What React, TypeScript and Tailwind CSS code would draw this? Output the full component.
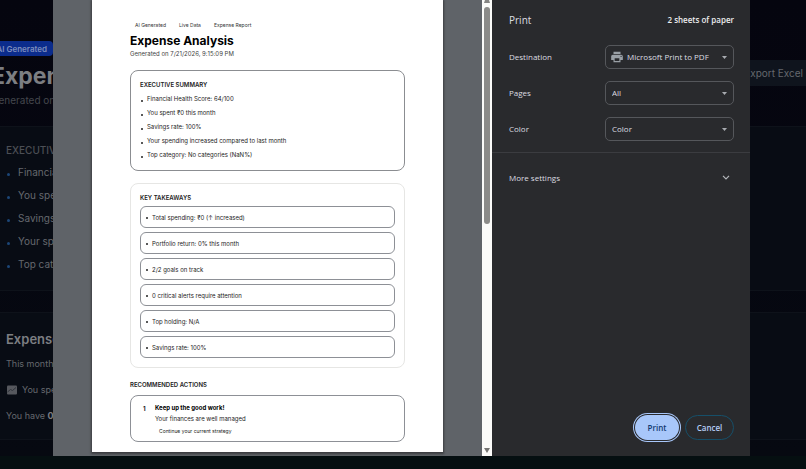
import type { ReactNode } from 'react';
import { MdPrint } from 'react-icons/md';

const highlights = ['Financial Health', 'You spent ₹0', 'Savings rate', 'Your spending', 'Top category'];

const summary = [
  'Financial Health Score: 64/100',
  'You spent ₹0 this month',
  'Savings rate: 100%',
  'Your spending increased compared to last month',
  'Top category: No categories (NaN%)',
];

const takeaways = [
  'Total spending: ₹0 (↑ increased)',
  'Portfolio return: 0% this month',
  '2/2 goals on track',
  '0 critical alerts require attention',
  'Top holding: N/A',
  'Savings rate: 100%',
];

const ReportPage = () => (
  <main className="overflow-hidden bg-gradient-to-b from-[#05050f] to-[#060911] pb-4 text-[#65686e]">
    <header className="-ml-[9px] flex h-[126px] items-start justify-between pt-[41px]">
      <div className="whitespace-nowrap">
        <span className="flex h-[15px] w-[62px] items-center justify-end rounded bg-[#0b2c8c] pr-[6px] text-[8px] font-semibold text-[#7d8dbd]">
          AI Generated
        </span>
        <h1 className="mt-1 text-[23px] leading-8 font-bold text-[#7c7e82]">Expense</h1>
        <p className="text-[10px] leading-4 text-[#44474d]">Generated on 7/21/2026</p>
      </div>
      <button className="mt-[19px] h-[26px] w-[78px] bg-[#0f141d] pr-[3px] text-right text-[10px] whitespace-nowrap text-[#65686e]">
        Export Excel
      </button>
    </header>

    <section className="border-y border-[#0e121a] bg-[#080c14] px-[6px] pt-[15px] pb-[14px]">
      <h2 className="text-[10px] leading-4 font-medium text-[#4c4f55]">EXECUTIVE SUMMARY</h2>
      <ul className="mt-[3px] text-[10px] leading-[23px]">
        {highlights.map((line) => (
          <li key={line} className="flex items-center gap-2">
            <span className="mt-1 ml-[1px] h-[3px] w-[3px] rounded-full bg-[#1c4677]"></span>
            {line}
          </li>
        ))}
      </ul>
    </section>

    <section className="mt-[21px] border-y border-[#0e121a] bg-[#080c14] px-[6px] pt-4 pb-[10px] text-[9px] leading-[26px]">
      <h2 className="text-[13px] leading-5 font-semibold text-[#7c7e82]">Expense</h2>
      <p className="mt-[2px]">This month</p>
      <p className="flex items-center gap-[5px]">
        <svg viewBox="0 0 10 10" className="ml-[1px] h-[10px] w-[10px]">
          <rect width="10" height="9" y="0.5" rx="1" fill="#56585e" />
          <path d="M0.5 7 3.5 4.5 5.5 5.5 9 2.5" fill="none" stroke="#30343b" strokeWidth="1" />
        </svg>
        You spent ₹0
      </p>
      <p>
        You have <b className="text-[#7c7e82]">0 alerts</b>
      </p>
    </section>
  </main>
);

const Paper = () => (
  <article className="mx-[39px] bg-white px-[38px] pt-[21px] pb-[10px] text-[6px] text-[#222] shadow-[0_1px_2px_1px_#3b3d40]">
    <div className="flex gap-[13px] px-[5px] text-[5px] leading-2 text-[#333]">
      <span>AI Generated</span>
      <span>Live Data</span>
      <span>Expense Report</span>
    </div>
    <h1 className="mt-1 text-[12px] leading-4 font-bold text-black">Expense Analysis</h1>
    <p className="mt-[1px] leading-2 text-[#444]">Generated on 7/21/2026, 9:15:09 PM</p>

    <section className="mt-3 rounded-[8px] border border-[#8b8d91] px-[9px] pt-[10px] pb-2">
      <h2 className="leading-2 font-semibold">EXECUTIVE SUMMARY</h2>
      <ul className="mt-[3px] leading-[14px]">
        {summary.map((line) => (
          <li key={line} className="flex items-center gap-1">
            <span className="mt-1 ml-[1px] h-[2px] w-[2px] rounded-full bg-[#222]"></span>
            {line}
          </li>
        ))}
      </ul>
    </section>

    <section className="mt-3 rounded-[8px] border border-[#e6e6e4] px-[9px] pt-[10px] pb-[9px]">
      <h2 className="leading-2 font-semibold">KEY TAKEAWAYS</h2>
      <ul className="mt-1 flex flex-col gap-1">
        {takeaways.map((line) => (
          <li key={line} className="flex h-[22px] items-center gap-1 rounded-[6px] border border-[#8d9096] px-[5px]">
            <span className="mt-[2px] h-[2px] w-[2px] rounded-full bg-[#222]"></span>
            {line}
          </li>
        ))}
      </ul>
    </section>

    <h2 className="mt-[13px] leading-2 font-semibold">RECOMMENDED ACTIONS</h2>
    <section className="mt-[6px] flex gap-2 rounded-[8px] border border-[#8d9096] px-3 pt-2 pb-[6px]">
      <span className="w-1 leading-[10px] font-bold">1</span>
      <div>
        <h3 className="leading-2 font-bold text-black">Keep up the good work!</h3>
        <p className="mt-[2px] leading-[10px]">Your finances are well managed</p>
        <p className="mt-[3px] pl-1 text-[5px] leading-2">Continue your current strategy</p>
      </div>
    </section>
  </article>
);

const Scrollbar = () => (
  <div className="flex w-[10px] flex-col items-center bg-[#fbfbf9] pb-[3px]">
    <svg viewBox="0 0 6 3" className="h-[3px] w-[6px]">
      <path d="M1 0h4l1 3H0z" fill="#858583" />
    </svg>
    <div className="mt-1 h-[217px] w-[6px] rounded-full bg-[#8b8b89]"></div>
    <svg viewBox="0 0 6 5" className="mt-auto h-[5px] w-[6px]">
      <path d="M0 0h6L3 5z" fill="#767674" />
    </svg>
  </div>
);

type SettingProps = { id: string; label: string; option: string; icon?: ReactNode };

const Setting = ({ id, label, option, icon }: SettingProps) => (
  <div className="flex items-center justify-between">
    <label htmlFor={id}>{label}</label>
    <div className="flex h-6 w-[129px] items-center rounded-[5px] border border-[#55575b] px-1">
      {icon}
      <select id={id} className="min-w-0 flex-1 appearance-none bg-transparent pl-[2px] outline-none">
        <option>{option}</option>
      </select>
      <svg viewBox="0 0 5 3" className="pointer-events-none mr-[2px] h-[3px] w-[5px]">
        <path d="M0 0h5L2.5 3z" fill="#a8abb0" />
      </svg>
    </div>
  </div>
);

const PrintPanel = () => (
  <aside className="flex w-[258px] flex-col bg-[#292a2d] font-['Open_Sans',sans-serif] text-[8px] text-[#dcdde0]">
    <div className="flex h-10 items-center justify-between pr-4 pl-[17px]">
      <h2 className="text-[10px]">Print</h2>
      <span className="font-semibold text-[#ececee]">2 sheets of paper</span>
    </div>
    <div className="mt-[5px] flex flex-col gap-3 pr-4 pl-[17px]">
      <Setting
        id="destination"
        label="Destination"
        option="Microsoft Print to PDF"
        icon={<MdPrint className="mr-[1px] h-[14px] w-[14px] shrink-0 text-[#9aa0a6]" />}
      />
      <Setting id="pages" label="Pages" option="All" />
      <Setting id="color" label="Color" option="Color" />
    </div>
    <button className="mt-[11px] flex h-[50px] items-center justify-between border-t border-[#3b3c40] pr-4 pl-[17px]">
      More settings
      <svg viewBox="0 0 8 5" className="mr-1 h-[5px] w-2">
        <path d="M1 0.8 4 3.8 7 0.8" fill="none" stroke="#b4b7bb" strokeWidth="1.2" />
      </svg>
    </button>
    <div className="mt-auto flex justify-end gap-[6px] px-4 pb-4 font-semibold">
      <button className="h-[25px] w-11 rounded-full bg-[#a8c7fa] text-[#123a70] ring-1 ring-[#a8c7fa] ring-offset-1 ring-offset-[#292a2d]">
        Print
      </button>
      <button className="h-[25px] w-[49px] rounded-full border border-[#164f69] text-[#b5cdf5]">Cancel</button>
    </div>
  </aside>
);

const App = () => {
  return (
    <div className="relative flex min-h-screen flex-col overflow-hidden bg-[#050f11] font-[Inter,sans-serif]">
      <ReportPage />
      <div role="dialog" aria-label="Print" className="absolute inset-x-0 top-0 mr-14 ml-[53px] flex">
        <div className="min-w-0 flex-1 bg-[#5f6368] pb-1">
          <Paper />
        </div>
        <Scrollbar />
        <PrintPanel />
      </div>
    </div>
  );
};

export default App;
